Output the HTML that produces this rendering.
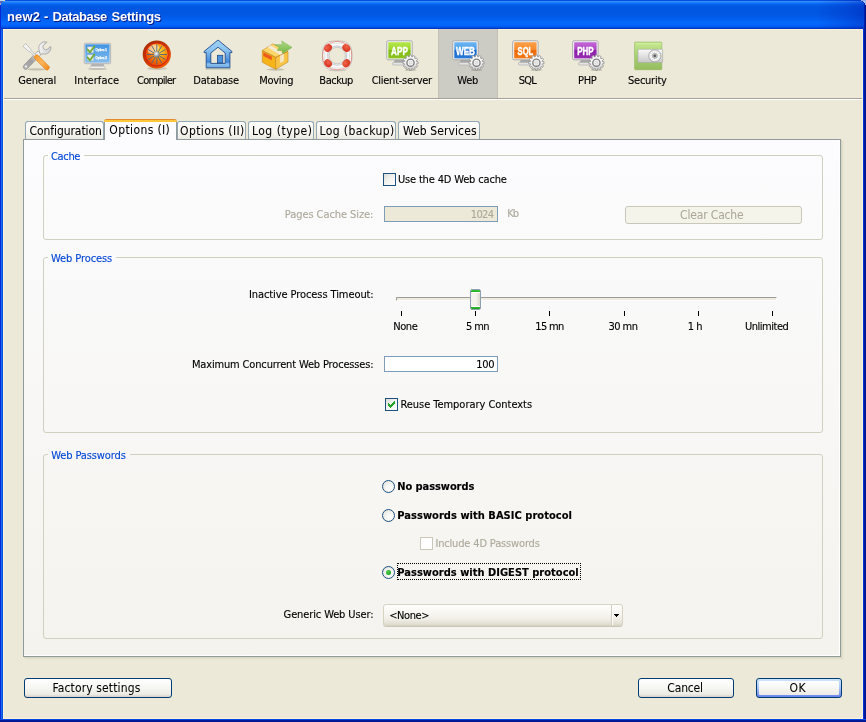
<!DOCTYPE html>
<html>
<head>
<meta charset="utf-8">
<title>new2 - Database Settings</title>
<style>
html,body{margin:0;padding:0;}
body{width:866px;height:722px;overflow:hidden;position:relative;background:#ece9d8;
 font-family:"DejaVu Sans Condensed","Liberation Sans",sans-serif;font-size:11px;color:#000;}
*{box-sizing:border-box;}
.abs{position:absolute;}
.tx{position:absolute;white-space:pre;margin:0;padding:0;}
#titlebar{left:0;top:0;width:866px;height:29px;
 background:linear-gradient(to bottom,#0150e0 0px,#0150e0 1px,#3a8cfb 1px,#3a8cfb 2px,#1c7cfa 2.5px,#0a70f8 3.5px,#0463ec 4.5px,#0359e4 6px,#0156e2 8px,#0156e2 14px,#025be9 17px,#0260f2 20px,#0468fc 22px,#0468fc 24px,#0260f8 26px,#0050e0 27.5px,#0035c5 28px,#0035c5 29px);}
#bl{left:0;top:29px;width:3px;height:693px;background:linear-gradient(to right,#0828d8 0,#0828d8 1px,#166aee 1px,#166aee 2px,#0452dd 2px,#0452dd 3px);}
#br{left:863px;top:29px;width:3px;height:693px;background:linear-gradient(to right,#0034d8 0,#0034d8 1px,#001da0 1px,#001da0 2px,#001589 2px,#001589 3px);}
#bb{left:0;top:719px;width:866px;height:3px;background:linear-gradient(to bottom,#0445ea 0,#0445ea 1px,#001da0 1px,#001da0 2px,#001589 2px,#001589 3px);}
.hl{background:#fdf3d8;}
.tab{position:absolute;top:121px;height:18px;border:1px solid #91a7b4;border-bottom:none;border-radius:3px 3px 0 0;
 background:linear-gradient(to bottom,#fdfdfb 0%,#f7f6f0 60%,#ecebe2 100%);}
#pane{left:23px;top:139px;width:818px;height:518px;border:1px solid #919b9c;
 background:linear-gradient(to bottom,#fcfcfe 0%,#f4f3ee 100%);box-shadow:inset -1px -1px 0 #ffffff,1px 1px 0 #d9d5c1,2px 2px 0 #e2dfcc,3px 3px 0 #e8e5d3;}
.grp{position:absolute;border:1px solid #d0d0bf;border-radius:3px;}
.gl{position:absolute;height:3px;}
.btn{position:absolute;height:20px;border:1px solid #003c74;border-radius:3px;background:linear-gradient(to bottom,#ffffff 0%,#f6f6f2 50%,#ecebe5 85%,#d6d0c5 100%);}
.inp{position:absolute;height:16px;border:1px solid #7f9db9;background:#fff;}
.cb{position:absolute;width:13px;height:13px;border:1px solid #1c5180;background:linear-gradient(135deg,#dcdcd7 0%,#f3f3f0 50%,#ffffff 100%);}
.rd{position:absolute;width:13px;height:13px;border:1px solid #1c5180;border-radius:50%;background:radial-gradient(circle at 65% 65%,#ffffff 0%,#f3f3f0 45%,#dcdcd7 100%);}
.tick{position:absolute;top:311px;width:1px;height:5px;background:#000;}
</style>
</head>
<body>
<!-- window chrome -->
<div class="abs" id="titlebar"></div>
<div class="abs" style="left:816px;top:0;width:50px;height:29px;background:linear-gradient(to right,rgba(0,24,170,0) 0%,rgba(0,24,170,0.22) 60%,rgba(0,24,170,0.42) 100%);"></div>
<div class="abs" style="left:0;top:5px;width:1px;height:24px;background:#0828d8;"></div>
<div class="abs" style="left:865px;top:5px;width:1px;height:24px;background:#00137f;"></div>
<div class="abs" style="left:864px;top:4px;width:1px;height:25px;background:#0020b0;"></div>
<svg class="abs" style="left:0;top:0" width="866" height="6" viewBox="0 0 866 6" shape-rendering="crispEdges">
<rect x="0" y="0" width="4" height="1" fill="#b4dcfa"/><rect x="4" y="0" width="1" height="1" fill="#e8dc98"/>
<rect x="0" y="1" width="3" height="1" fill="#6a68a8"/><rect x="0" y="2" width="2" height="1" fill="#5660b4"/>
<rect x="0" y="3" width="1" height="2" fill="#a0acd0"/>
<rect x="861" y="0" width="5" height="1" fill="#94aeea"/><rect x="863" y="1" width="3" height="1" fill="#b0c4f0"/>
<rect x="864" y="2" width="2" height="1" fill="#a8c0ec"/><rect x="865" y="3" width="1" height="2" fill="#a0b8e8"/>
<rect x="862" y="1" width="1" height="1" fill="#0a30c0"/><rect x="863" y="2" width="1" height="1" fill="#0a30c0"/><rect x="864" y="3" width="1" height="1" fill="#0a30c0"/>
</svg>
<div class="abs hl" style="left:3px;top:29px;width:860px;height:1px;"></div>
<div class="abs hl" style="left:3px;top:29px;width:1px;height:690px;"></div>
<div class="abs hl" style="left:862px;top:29px;width:1px;height:690px;"></div>
<div class="abs hl" style="left:3px;top:718px;width:860px;height:1px;"></div>
<div class="abs" id="bl"></div>
<div class="abs" id="br"></div>
<div class="abs" id="bb"></div>

<!-- toolbar -->
<div class="abs" style="left:438px;top:29px;width:60px;height:69px;background:#cdccc4;border-left:1px solid #c2c1b8;border-right:1px solid #c2c1b8;"></div>
<div class="abs" style="left:4px;top:98px;width:858px;height:1px;background:#a5a397;"></div>
<div class="abs" style="left:4px;top:99px;width:858px;height:1px;background:#ffffff;"></div>
<div id="icons" style="position:absolute;left:0;top:0;width:866px;height:100px;will-change:transform;">
<svg width="0" height="0" style="position:absolute"><defs>
<linearGradient id="gMetal" x1="0" y1="0" x2="1" y2="1"><stop offset="0" stop-color="#ffffff"/><stop offset="1" stop-color="#c8c8c8"/></linearGradient>
<linearGradient id="gOrange" x1="0" y1="0" x2="1" y2="0"><stop offset="0" stop-color="#f79a2a"/><stop offset="0.5" stop-color="#fdb55a"/><stop offset="1" stop-color="#f08a1c"/></linearGradient>
<linearGradient id="gGrayH" x1="0" y1="0" x2="1" y2="0"><stop offset="0" stop-color="#b4b4b4"/><stop offset="0.45" stop-color="#a0a0a0"/><stop offset="0.62" stop-color="#b8b8b8"/><stop offset="0.8" stop-color="#ececec"/><stop offset="1" stop-color="#f4f4f4"/></linearGradient>
<linearGradient id="gScreenB" x1="0" y1="0" x2="0" y2="1"><stop offset="0" stop-color="#3f93e2"/><stop offset="1" stop-color="#86bdec"/></linearGradient>
<linearGradient id="gStand" x1="0" y1="0" x2="0" y2="1"><stop offset="0" stop-color="#a8a8a8"/><stop offset="0.5" stop-color="#e8e8e8"/><stop offset="1" stop-color="#c4c4c4"/></linearGradient>
<radialGradient id="gComp" cx="0.62" cy="0.36" r="0.75"><stop offset="0" stop-color="#ffdc3c"/><stop offset="0.32" stop-color="#fca010"/><stop offset="0.68" stop-color="#f26000"/><stop offset="1" stop-color="#e43800"/></radialGradient>
<linearGradient id="gCompRing" x1="0.1" y1="0" x2="0.9" y2="1"><stop offset="0" stop-color="#9c2c04"/><stop offset="0.5" stop-color="#cc3c04"/><stop offset="1" stop-color="#f66408"/></linearGradient>
<radialGradient id="gBall" cx="0.4" cy="0.35" r="0.7"><stop offset="0" stop-color="#ffffff"/><stop offset="0.6" stop-color="#9aa4ae"/><stop offset="1" stop-color="#5a6672"/></radialGradient>
<linearGradient id="gHouse" x1="0" y1="0" x2="0" y2="1"><stop offset="0" stop-color="#9fd2f6"/><stop offset="0.35" stop-color="#8cc4f0"/><stop offset="0.8" stop-color="#3f86d8"/><stop offset="0.86" stop-color="#8ec2ee"/><stop offset="1" stop-color="#6aa8e4"/></linearGradient>
<linearGradient id="gArrow" x1="0" y1="0" x2="0" y2="1"><stop offset="0" stop-color="#b0dc84"/><stop offset="1" stop-color="#74b448"/></linearGradient>
<radialGradient id="gRed" cx="0.4" cy="0.35" r="0.7"><stop offset="0" stop-color="#f2644a"/><stop offset="1" stop-color="#d2301a"/></radialGradient>
<linearGradient id="gSafe" x1="0" y1="0" x2="0" y2="1"><stop offset="0" stop-color="#c6e890"/><stop offset="0.45" stop-color="#aad474"/><stop offset="1" stop-color="#96bc60"/></linearGradient>
<linearGradient id="gDoor" x1="0" y1="0" x2="0" y2="1"><stop offset="0" stop-color="#fafafa"/><stop offset="1" stop-color="#c8c8c8"/></linearGradient>
<linearGradient id="gGear" x1="0" y1="0" x2="0" y2="1"><stop offset="0" stop-color="#ffffff"/><stop offset="0.6" stop-color="#f0f0f0"/><stop offset="1" stop-color="#c4c4c4"/></linearGradient>
<linearGradient id="gAPP" x1="0" y1="0" x2="0" y2="1"><stop offset="0" stop-color="#b4e84a"/><stop offset="0.45" stop-color="#9cd42c"/><stop offset="0.5" stop-color="#84bc1a"/><stop offset="1" stop-color="#8cc41e"/></linearGradient>
<linearGradient id="gWEB" x1="0" y1="0" x2="0" y2="1"><stop offset="0" stop-color="#6cb8f4"/><stop offset="0.45" stop-color="#4a9ae8"/><stop offset="0.5" stop-color="#1a66c8"/><stop offset="1" stop-color="#2a7ad8"/></linearGradient>
<linearGradient id="gSQL" x1="0" y1="0" x2="0" y2="1"><stop offset="0" stop-color="#fca04a"/><stop offset="0.45" stop-color="#f88a2c"/><stop offset="0.5" stop-color="#ec6a0a"/><stop offset="1" stop-color="#f27a18"/></linearGradient>
<linearGradient id="gPHP" x1="0" y1="0" x2="0" y2="1"><stop offset="0" stop-color="#c46ad8"/><stop offset="0.45" stop-color="#aa44c4"/><stop offset="0.5" stop-color="#8a1ea6"/><stop offset="1" stop-color="#9a2cb4"/></linearGradient>
</defs></svg>
<svg class="abs" style="left:19px;top:38px" width="36" height="34" viewBox="19 38 36 34"><ellipse cx="36.5" cy="69.4" rx="9" ry="1.1" fill="#5a5846" opacity="0.28"/><g transform="translate(25.6,66.9) rotate(-46)"><rect x="-2.4" y="-2.4" width="23" height="4.8" rx="2.3" fill="url(#gGrayH)" stroke="#8a8a8a" stroke-width="0.6"/><circle cx="0.6" cy="0" r="1.1" fill="#f4f4f4"/></g><g transform="translate(44.6,47.9) rotate(-40)"><path d="M -7.5 2 L -5.5 -2.2 A 6.2 6.2 0 0 1 5.6 -2.8 L 1.5 -2.8 A 2.6 2.6 0 0 0 1.5 2.8 L 5.6 2.8 A 6.2 6.2 0 0 1 -5 3.6 L -7.5 2 Z" fill="url(#gMetal)" stroke="#9c9c9c" stroke-width="0.7"/></g><g transform="translate(24.3,44.9) rotate(45)"><path d="M0 -1.9 L7.5 -1.5 L9 -0.8 L16 -0.8 L16 0.8 L9 0.8 L7.5 1.5 L0 1.9 Z" fill="#f4f4f4" stroke="#a8a8a8" stroke-width="0.6"/><rect x="15.3" y="-2.3" width="19" height="4.6" rx="1.8" fill="url(#gOrange)" stroke="#d8801c" stroke-width="0.6" transform="rotate(0)"/></g></svg>
<svg class="abs" style="left:80px;top:38px" width="36" height="34" viewBox="80 38 36 34"><ellipse cx="97.5" cy="68.9" rx="9.5" ry="1.2" fill="#5a5846" opacity="0.28"/><path d="M91.6 63.6 H103.6 L104.4 66.4 H90.6 Z" fill="#b4b4b4"/><rect x="90.2" y="66.3" width="14.6" height="2.2" rx="0.6" fill="#eeeeee" stroke="#b0b0b0" stroke-width="0.5"/><rect x="84.3" y="43.3" width="26.3" height="20.4" rx="0.8" fill="#f4f4f4" stroke="#a6a6a6" stroke-width="0.8"/><rect x="85.3" y="44.3" width="24.3" height="18.4" fill="url(#gScreenB)"/><rect x="87.6" y="46.9" width="5.8" height="5.6" fill="#eeeeee" stroke="#c8c8c8" stroke-width="0.4"/><path d="M87.6 49.5 L90 52.3 L94.2 46.5" fill="none" stroke="#74ac34" stroke-width="1.9" stroke-linecap="round" stroke-linejoin="round"/><text x="95.6" y="51.4" font-family="Liberation Sans,sans-serif" font-weight="bold" font-size="3.6" fill="#ffffff" stroke="#ffffff" stroke-width="0.25" textLength="11.2" lengthAdjust="spacingAndGlyphs">Option 1</text><rect x="87.6" y="54.9" width="5.8" height="5.6" fill="#eeeeee" stroke="#c8c8c8" stroke-width="0.4"/><path d="M87.6 57.5 L90 60.3 L94.2 54.5" fill="none" stroke="#74ac34" stroke-width="1.9" stroke-linecap="round" stroke-linejoin="round"/><text x="95.6" y="59.4" font-family="Liberation Sans,sans-serif" font-weight="bold" font-size="3.6" fill="#ffffff" stroke="#ffffff" stroke-width="0.25" textLength="11.2" lengthAdjust="spacingAndGlyphs">Option 2</text></svg>
<svg class="abs" style="left:140px;top:38px" width="36" height="34" viewBox="140 38 36 34"><ellipse cx="157" cy="68.6" rx="10" ry="1.4" fill="#5a5846" opacity="0.25"/><circle cx="156.8" cy="54.5" r="14.1" fill="url(#gCompRing)"/><circle cx="156.8" cy="54.5" r="11.6" fill="url(#gComp)" stroke="#d41414" stroke-width="0.9"/><ellipse cx="153.3" cy="49.0" rx="6" ry="3.8" fill="#ffffff" opacity="0.55" transform="rotate(-30 153.3 49.0)"/><line x1="159.80" y1="54.50" x2="167.00" y2="54.50" stroke="#4c6680" stroke-width="0.9"/><line x1="159.40" y1="56.00" x2="165.63" y2="59.60" stroke="#4c6680" stroke-width="0.9"/><line x1="158.30" y1="57.10" x2="161.90" y2="63.33" stroke="#4c6680" stroke-width="0.9"/><line x1="156.80" y1="57.50" x2="156.80" y2="64.70" stroke="#4c6680" stroke-width="0.9"/><line x1="155.30" y1="57.10" x2="151.70" y2="63.33" stroke="#4c6680" stroke-width="0.9"/><line x1="154.20" y1="56.00" x2="147.97" y2="59.60" stroke="#4c6680" stroke-width="0.9"/><line x1="153.80" y1="54.50" x2="146.60" y2="54.50" stroke="#4c6680" stroke-width="0.9"/><line x1="154.20" y1="53.00" x2="147.97" y2="49.40" stroke="#4c6680" stroke-width="0.9"/><line x1="155.30" y1="51.90" x2="151.70" y2="45.67" stroke="#4c6680" stroke-width="0.9"/><line x1="156.80" y1="51.50" x2="156.80" y2="44.30" stroke="#4c6680" stroke-width="0.9"/><line x1="158.30" y1="51.90" x2="161.90" y2="45.67" stroke="#4c6680" stroke-width="0.9"/><line x1="159.40" y1="53.00" x2="165.63" y2="49.40" stroke="#4c6680" stroke-width="0.9"/><circle cx="156.8" cy="54.5" r="2.9" fill="url(#gBall)"/></svg>
<svg class="abs" style="left:200px;top:38px" width="36" height="34" viewBox="200 38 36 34"><path d="M205.4 69 H231 " stroke="#5a5846" stroke-width="1.4" opacity="0.25"/><path d="M218 40 L231.9 51.4 L231.9 52.6 L229.9 52.6 L229.9 67.8 L206.2 67.8 L206.2 52.6 L204.1 52.6 L204.1 51.4 Z M218 47.2 L225.2 53 L225.2 63.4 L210.8 63.4 L210.8 53 Z" fill="url(#gHouse)" fill-rule="evenodd" stroke="#204c8c" stroke-width="0.9" stroke-linejoin="round"/><rect x="217.4" y="55.3" width="5.4" height="7.6" fill="#4a92dc" stroke="#204c8c" stroke-width="0.8"/></svg>
<svg class="abs" style="left:259px;top:38px" width="36" height="34" viewBox="259 38 36 34"><ellipse cx="275.5" cy="69.5" rx="9" ry="1.2" fill="#5a5846" opacity="0.28"/><path d="M262.3 50.5 L275.7 57.3 L275.7 69.3 L262.3 62.3 Z" fill="#f6b419" stroke="#c88818" stroke-width="0.6"/><path d="M263.3 52.3 L271.8 56.4 L271.8 60.2 L263.3 56 Z" fill="#ee5a1e"/><path d="M275.7 57.3 L288 51.3 L288 62 L275.7 69.3 Z" fill="#f9c548" stroke="#c88818" stroke-width="0.6"/><path d="M280.2 55.1 L283.8 53.3 L283.8 61 L280.2 63 Z" fill="#f4e8cc"/><path d="M262.3 50.5 L272.8 43.9 L288 51.3 L275.7 57.3 Z" fill="#fbd66a" stroke="#c88818" stroke-width="0.6"/><path d="M267.6 47.2 L270.6 45.3 L283.8 53.3 L280.2 55.1 Z" fill="#f6ead2"/><path d="M262.3 50.5 L275.7 57.3 L288 51.3" fill="none" stroke="#c88a30" stroke-width="0.5"/><path d="M274.9 44.7 L282.3 44.7 L281.7 40.9 L292 47.4 L282.4 53.5 L282.4 50.4 L277.2 50.4 L279.4 47.4 Z" fill="url(#gArrow)" stroke="#6eae48" stroke-width="0.5" stroke-linejoin="round"/></svg>
<svg class="abs" style="left:319px;top:38px" width="36" height="34" viewBox="319 38 36 34"><ellipse cx="337.3" cy="70.3" rx="8.5" ry="1.0" fill="#5a5846" opacity="0.22"/><path d="M332.9 41.0 H341.5 A10.3 10.3 0 0 1 351.8 51.3 V59.900000000000006 A10.3 10.3 0 0 1 341.5 70.2 H332.9 A10.3 10.3 0 0 1 322.59999999999997 59.900000000000006 V51.3 A10.3 10.3 0 0 1 332.9 41.0 Z M328.9 55.6 A8.3 8.3 0 1 0 345.5 55.6 A8.3 8.3 0 1 0 328.9 55.6 Z" fill="#fcfcfc" fill-rule="evenodd" stroke="#b4b4b4" stroke-width="0.7"/><circle cx="337.2" cy="55.6" r="9.600000000000001" fill="none" stroke="#d2d5d8" stroke-width="1.4"/><rect x="324.79999999999995" y="43.2" width="24.799999999999997" height="24.799999999999997" rx="8.3" fill="none" stroke="#dcdee0" stroke-width="0.9"/><ellipse cx="328.10" cy="48.00" rx="4.2" ry="3.5" transform="rotate(-45 328.10 48.00)" fill="url(#gRed)"/><ellipse cx="346.30" cy="48.00" rx="4.2" ry="3.5" transform="rotate(45 346.30 48.00)" fill="url(#gRed)"/><ellipse cx="328.10" cy="63.20" rx="4.2" ry="3.5" transform="rotate(45 328.10 63.20)" fill="url(#gRed)"/><ellipse cx="346.30" cy="63.20" rx="4.2" ry="3.5" transform="rotate(-45 346.30 63.20)" fill="url(#gRed)"/><path d="M325.59999999999997 45.0 Q337.2 37.8 348.8 45.0 Q355.0 55.6 348.8 66.2 Q337.2 73.4 325.59999999999997 66.2 Q319.4 55.6 325.59999999999997 45.0 Z" fill="none" stroke="#dc5038" stroke-width="0.55" opacity="0.9"/></svg>
<svg class="abs" style="left:384px;top:38px" width="36" height="34" viewBox="384 38 36 34"><ellipse cx="410.5" cy="70.2" rx="6" ry="0.9" fill="#5a5846" opacity="0.25"/><path d="M394.9 59.8 H404.1 L404.9 62.8 H393.7 Z" fill="#a8a8a8"/><rect x="392.7" y="62.4" width="14" height="2.6" rx="0.6" fill="#e4e4e4" stroke="#a8a8a8" stroke-width="0.6"/><rect x="386.8" y="40.8" width="25.4" height="19" rx="1.4" fill="#f8f8f8" stroke="#a0a0a0" stroke-width="0.9"/><rect x="388.3" y="42.2" width="22.4" height="16.2" fill="url(#gAPP)"/><text x="399.5" y="54.5" text-anchor="middle" font-family="Liberation Sans,sans-serif" font-weight="bold" font-size="11.6" fill="#ffffff" stroke="#ffffff" stroke-width="0.45" textLength="16.8" lengthAdjust="spacingAndGlyphs">APP</text><path d="M416.39 61.58 L418.14 61.73 L418.14 63.67 L416.39 63.82 L416.17 64.67 L417.60 65.68 L416.63 67.36 L415.04 66.62 L414.42 67.24 L415.16 68.83 L413.48 69.80 L412.47 68.37 L411.62 68.59 L411.47 70.34 L409.53 70.34 L409.38 68.59 L408.53 68.37 L407.52 69.80 L405.84 68.83 L406.58 67.24 L405.96 66.62 L404.37 67.36 L403.40 65.68 L404.83 64.67 L404.61 63.82 L402.86 63.67 L402.86 61.73 L404.61 61.58 L404.83 60.73 L403.40 59.72 L404.37 58.04 L405.96 58.78 L406.58 58.16 L405.84 56.57 L407.52 55.60 L408.53 57.03 L409.38 56.81 L409.53 55.06 L411.47 55.06 L411.62 56.81 L412.47 57.03 L413.48 55.60 L415.16 56.57 L414.42 58.16 L415.04 58.78 L416.63 58.04 L417.60 59.72 L416.17 60.73 Z" fill="url(#gGear)" stroke="#909090" stroke-width="0.8" stroke-linejoin="round"/><circle cx="410.5" cy="62.7" r="3.6" fill="#f6f6f6" stroke="#808080" stroke-width="1.4"/><circle cx="410.5" cy="62.7" r="1.5" fill="#ececec" stroke="#bcbcbc" stroke-width="0.5"/></svg>
<svg class="abs" style="left:450px;top:38px" width="36" height="34" viewBox="450 38 36 34"><ellipse cx="476.5" cy="70.2" rx="6" ry="0.9" fill="#5a5846" opacity="0.25"/><path d="M460.9 59.8 H470.1 L470.9 62.8 H459.7 Z" fill="#a8a8a8"/><rect x="458.7" y="62.4" width="14" height="2.6" rx="0.6" fill="#e4e4e4" stroke="#a8a8a8" stroke-width="0.6"/><rect x="452.8" y="40.8" width="25.4" height="19" rx="1.4" fill="#f8f8f8" stroke="#a0a0a0" stroke-width="0.9"/><rect x="454.3" y="42.2" width="22.4" height="16.2" fill="url(#gWEB)"/><text x="465.5" y="54.5" text-anchor="middle" font-family="Liberation Sans,sans-serif" font-weight="bold" font-size="11.6" fill="#ffffff" stroke="#ffffff" stroke-width="0.45" textLength="19" lengthAdjust="spacingAndGlyphs">WEB</text><path d="M482.39 61.58 L484.14 61.73 L484.14 63.67 L482.39 63.82 L482.17 64.67 L483.60 65.68 L482.63 67.36 L481.04 66.62 L480.42 67.24 L481.16 68.83 L479.48 69.80 L478.47 68.37 L477.62 68.59 L477.47 70.34 L475.53 70.34 L475.38 68.59 L474.53 68.37 L473.52 69.80 L471.84 68.83 L472.58 67.24 L471.96 66.62 L470.37 67.36 L469.40 65.68 L470.83 64.67 L470.61 63.82 L468.86 63.67 L468.86 61.73 L470.61 61.58 L470.83 60.73 L469.40 59.72 L470.37 58.04 L471.96 58.78 L472.58 58.16 L471.84 56.57 L473.52 55.60 L474.53 57.03 L475.38 56.81 L475.53 55.06 L477.47 55.06 L477.62 56.81 L478.47 57.03 L479.48 55.60 L481.16 56.57 L480.42 58.16 L481.04 58.78 L482.63 58.04 L483.60 59.72 L482.17 60.73 Z" fill="url(#gGear)" stroke="#909090" stroke-width="0.8" stroke-linejoin="round"/><circle cx="476.5" cy="62.7" r="3.6" fill="#f6f6f6" stroke="#808080" stroke-width="1.4"/><circle cx="476.5" cy="62.7" r="1.5" fill="#ececec" stroke="#bcbcbc" stroke-width="0.5"/></svg>
<svg class="abs" style="left:510px;top:38px" width="36" height="34" viewBox="510 38 36 34"><ellipse cx="536.4" cy="70.2" rx="6" ry="0.9" fill="#5a5846" opacity="0.25"/><path d="M520.8 59.8 H530.0 L530.8 62.8 H519.6 Z" fill="#a8a8a8"/><rect x="518.6" y="62.4" width="14" height="2.6" rx="0.6" fill="#e4e4e4" stroke="#a8a8a8" stroke-width="0.6"/><rect x="512.6999999999999" y="40.8" width="25.4" height="19" rx="1.4" fill="#f8f8f8" stroke="#a0a0a0" stroke-width="0.9"/><rect x="514.1999999999999" y="42.2" width="22.4" height="16.2" fill="url(#gSQL)"/><text x="525.4" y="54.5" text-anchor="middle" font-family="Liberation Sans,sans-serif" font-weight="bold" font-size="11.6" fill="#ffffff" stroke="#ffffff" stroke-width="0.45" textLength="15.7" lengthAdjust="spacingAndGlyphs">SQL</text><path d="M542.29 61.58 L544.04 61.73 L544.04 63.67 L542.29 63.82 L542.07 64.67 L543.50 65.68 L542.53 67.36 L540.94 66.62 L540.32 67.24 L541.06 68.83 L539.38 69.80 L538.37 68.37 L537.52 68.59 L537.37 70.34 L535.43 70.34 L535.28 68.59 L534.43 68.37 L533.42 69.80 L531.74 68.83 L532.48 67.24 L531.86 66.62 L530.27 67.36 L529.30 65.68 L530.73 64.67 L530.51 63.82 L528.76 63.67 L528.76 61.73 L530.51 61.58 L530.73 60.73 L529.30 59.72 L530.27 58.04 L531.86 58.78 L532.48 58.16 L531.74 56.57 L533.42 55.60 L534.43 57.03 L535.28 56.81 L535.43 55.06 L537.37 55.06 L537.52 56.81 L538.37 57.03 L539.38 55.60 L541.06 56.57 L540.32 58.16 L540.94 58.78 L542.53 58.04 L543.50 59.72 L542.07 60.73 Z" fill="url(#gGear)" stroke="#909090" stroke-width="0.8" stroke-linejoin="round"/><circle cx="536.4" cy="62.7" r="3.6" fill="#f6f6f6" stroke="#808080" stroke-width="1.4"/><circle cx="536.4" cy="62.7" r="1.5" fill="#ececec" stroke="#bcbcbc" stroke-width="0.5"/></svg>
<svg class="abs" style="left:570px;top:38px" width="36" height="34" viewBox="570 38 36 34"><ellipse cx="596.4" cy="70.2" rx="6" ry="0.9" fill="#5a5846" opacity="0.25"/><path d="M580.8 59.8 H590.0 L590.8 62.8 H579.6 Z" fill="#a8a8a8"/><rect x="578.6" y="62.4" width="14" height="2.6" rx="0.6" fill="#e4e4e4" stroke="#a8a8a8" stroke-width="0.6"/><rect x="572.6999999999999" y="40.8" width="25.4" height="19" rx="1.4" fill="#f8f8f8" stroke="#a0a0a0" stroke-width="0.9"/><rect x="574.1999999999999" y="42.2" width="22.4" height="16.2" fill="url(#gPHP)"/><text x="585.4" y="54.5" text-anchor="middle" font-family="Liberation Sans,sans-serif" font-weight="bold" font-size="11.6" fill="#ffffff" stroke="#ffffff" stroke-width="0.45" textLength="16.4" lengthAdjust="spacingAndGlyphs">PHP</text><path d="M602.29 61.58 L604.04 61.73 L604.04 63.67 L602.29 63.82 L602.07 64.67 L603.50 65.68 L602.53 67.36 L600.94 66.62 L600.32 67.24 L601.06 68.83 L599.38 69.80 L598.37 68.37 L597.52 68.59 L597.37 70.34 L595.43 70.34 L595.28 68.59 L594.43 68.37 L593.42 69.80 L591.74 68.83 L592.48 67.24 L591.86 66.62 L590.27 67.36 L589.30 65.68 L590.73 64.67 L590.51 63.82 L588.76 63.67 L588.76 61.73 L590.51 61.58 L590.73 60.73 L589.30 59.72 L590.27 58.04 L591.86 58.78 L592.48 58.16 L591.74 56.57 L593.42 55.60 L594.43 57.03 L595.28 56.81 L595.43 55.06 L597.37 55.06 L597.52 56.81 L598.37 57.03 L599.38 55.60 L601.06 56.57 L600.32 58.16 L600.94 58.78 L602.53 58.04 L603.50 59.72 L602.07 60.73 Z" fill="url(#gGear)" stroke="#909090" stroke-width="0.8" stroke-linejoin="round"/><circle cx="596.4" cy="62.7" r="3.6" fill="#f6f6f6" stroke="#808080" stroke-width="1.4"/><circle cx="596.4" cy="62.7" r="1.5" fill="#ececec" stroke="#bcbcbc" stroke-width="0.5"/></svg>
<svg class="abs" style="left:630px;top:38px" width="36" height="34" viewBox="630 38 36 34"><rect x="634.6" y="42.1" width="27.2" height="27.6" rx="0.8" fill="url(#gSafe)" stroke="#8eb458" stroke-width="0.6"/><rect x="635.6" y="43" width="25.2" height="1.4" fill="#d4f0a4" opacity="0.8"/><rect x="638" y="49.3" width="24.6" height="13.2" rx="0.6" fill="url(#gDoor)" stroke="#a8a8a8" stroke-width="0.6"/><circle cx="654.8" cy="55.8" r="6.1" fill="#e2e2e2" stroke="#a2a2a2" stroke-width="0.8"/><line x1="657.70" y1="56.58" x2="659.82" y2="57.15" stroke="#ffffff" stroke-width="1.1"/><line x1="656.92" y1="57.92" x2="658.48" y2="59.48" stroke="#ffffff" stroke-width="1.1"/><line x1="655.58" y1="58.70" x2="656.15" y2="60.82" stroke="#ffffff" stroke-width="1.1"/><line x1="654.02" y1="58.70" x2="653.45" y2="60.82" stroke="#ffffff" stroke-width="1.1"/><line x1="652.68" y1="57.92" x2="651.12" y2="59.48" stroke="#ffffff" stroke-width="1.1"/><line x1="651.90" y1="56.58" x2="649.78" y2="57.15" stroke="#ffffff" stroke-width="1.1"/><line x1="651.90" y1="55.02" x2="649.78" y2="54.45" stroke="#ffffff" stroke-width="1.1"/><line x1="652.68" y1="53.68" x2="651.12" y2="52.12" stroke="#ffffff" stroke-width="1.1"/><line x1="654.02" y1="52.90" x2="653.45" y2="50.78" stroke="#ffffff" stroke-width="1.1"/><line x1="655.58" y1="52.90" x2="656.15" y2="50.78" stroke="#ffffff" stroke-width="1.1"/><line x1="656.92" y1="53.68" x2="658.48" y2="52.12" stroke="#ffffff" stroke-width="1.1"/><line x1="657.70" y1="55.02" x2="659.82" y2="54.45" stroke="#ffffff" stroke-width="1.1"/><circle cx="654.8" cy="55.8" r="2.6" fill="#c4c4c4" stroke="#9a9a9a" stroke-width="0.5"/><circle cx="654.8" cy="55.8" r="1.4" fill="#5a5a5a"/></svg>

</div>

<!-- tab pane -->
<div class="abs" id="pane"></div>
<div class="tab" style="left:25px;width:79px;"></div>
<div class="tab" style="left:177px;width:69px;"></div>
<div class="tab" style="left:248px;width:66px;"></div>
<div class="tab" style="left:316px;width:80px;"></div>
<div class="tab" style="left:398px;width:82px;"></div>
<div class="tab" id="seltab" style="left:104px;top:119px;width:73px;height:21px;background:#fcfcfe;border-top:none;border-color:#919b9c;">
<div class="abs" style="left:-1px;top:0;width:73px;height:3px;border-radius:3px 3px 0 0;background:linear-gradient(to bottom,#e68b2c 0,#e68b2c 1px,#ffc73c 1px,#ffc73c 3px);"></div></div>

<!-- Cache group -->
<div class="grp" style="left:43px;top:155px;width:780px;height:85px;"></div>
<div class="gl" style="left:48px;top:154px;width:36px;background:#fcfcfd;"></div>
<div class="cb" style="left:383px;top:173px;"></div>
<div class="inp" style="left:384px;top:206px;width:114px;background:#ece9d8;"></div>
<div class="btn" style="left:625px;top:206px;width:177px;height:18px;border-color:#c9c7ba;background:#f5f4ea;"></div>

<!-- Web Process group -->
<div class="grp" style="left:43px;top:257px;width:780px;height:176px;"></div>
<div class="gl" style="left:48px;top:256px;width:68px;background:#fafafa;"></div>
<div class="abs" style="left:396px;top:297px;width:381px;height:4px;border:1px solid;border-color:#9d9c99 #fff #fff #9d9c99;border-radius:1px;background:#f0ede0;"></div>
<div class="abs" id="thumb" style="left:470px;top:289px;width:11px;height:21px;border:1px solid #8e9fb4;border-radius:2px;background:linear-gradient(to right,#f4f3ee 0%,#f4f3ee 55%,#e6e4dc 80%,#d9d7ce 100%);overflow:hidden;">
 <div class="abs" style="left:0;top:0;width:9px;height:3px;background:linear-gradient(to bottom,#3cc43c 0,#1fae1f 2px,#ffffff 2px,#ffffff 3px);"></div>
 <div class="abs" style="left:0;bottom:0;width:9px;height:3px;background:linear-gradient(to bottom,#ffffff 0,#ffffff 1px,#2fc02f 1px,#1aa01a 3px);"></div>
</div>
<div class="tick" style="left:401px;"></div>
<div class="tick" style="left:475px;"></div>
<div class="tick" style="left:549px;"></div>
<div class="tick" style="left:624px;"></div>
<div class="tick" style="left:698px;"></div>
<div class="tick" style="left:772px;"></div>
<div class="inp" style="left:384px;top:356px;width:114px;"></div>
<div class="cb" style="left:385px;top:398px;"><svg class="abs" style="left:0;top:0" width="11" height="11" viewBox="0 0 11 11" shape-rendering="crispEdges"><g fill="#21a121"><rect x="2" y="4" width="1" height="3"/><rect x="3" y="5" width="1" height="3"/><rect x="4" y="6" width="1" height="3"/><rect x="5" y="5" width="1" height="3"/><rect x="6" y="4" width="1" height="3"/><rect x="7" y="3" width="1" height="3"/><rect x="8" y="2" width="1" height="3"/></g></svg></div>

<!-- Web Passwords group -->
<div class="grp" style="left:43px;top:454px;width:780px;height:185px;"></div>
<div class="gl" style="left:48px;top:453px;width:82px;background:#f8f8f6;"></div>
<div class="rd" style="left:382px;top:480px;"></div>
<div class="rd" style="left:382px;top:509px;"></div>
<div class="cb" style="left:420px;top:537px;border-color:#cac8bb;background:#fff;"></div>
<div class="rd" style="left:382px;top:566px;"><div class="abs" style="left:3px;top:3px;width:5px;height:5px;border-radius:50%;background:radial-gradient(circle at 40% 40%,#55d551 0%,#21a121 70%,#1a7e1a 100%);"></div></div>
<div class="abs" style="left:397px;top:563px;width:184px;height:17px;border:1px dotted #000;"></div>
<div class="abs" id="dd" style="left:383px;top:604px;width:240px;height:22px;border:1px solid #d6d3c3;border-radius:3px;background:linear-gradient(to bottom,#fefefd 0%,#f6f5f0 45%,#eeece4 75%,#dedbcd 100%);box-shadow:0 1px 0 #cbc8b8;">
 <div class="abs" style="left:227px;top:0;width:1px;height:20px;background:#d3d0c1;"></div>
 <div class="abs" style="left:228px;top:0;width:1px;height:20px;background:#ffffff;"></div>
 <svg class="abs" style="left:230px;top:9px" width="5" height="3" viewBox="0 0 5 3" shape-rendering="crispEdges"><rect x="0" y="0" width="5" height="1"/><rect x="1" y="1" width="3" height="1"/><rect x="2" y="2" width="1" height="1"/></svg>
</div>

<!-- bottom buttons -->
<div class="btn" style="left:24px;top:678px;width:148px;"></div>
<div class="btn" style="left:638px;top:678px;width:96px;"></div>
<div class="btn" style="left:756px;top:678px;width:86px;background:linear-gradient(to bottom,#cee7ff 0%,#a9c5f8 50%,#6982ee 100%);"><div class="abs" style="left:2px;top:2px;width:80px;height:14px;border-radius:1px;background:linear-gradient(to bottom,#ffffff 0%,#f6f6f2 50%,#ecebe5 100%);"></div></div>

<!-- text -->
<div id="txt" style="position:absolute;left:0;top:0;width:866px;height:722px;will-change:transform;">
<div id="title" class="tx" style="left:7.00px;top:9.31px;font:bold 13px/16px 'Liberation Sans',sans-serif;letter-spacing:0.000px;color:#fff;text-shadow:1px 1px 0 #0a1883;"><span style="letter-spacing:0.15px">new2</span><span style="letter-spacing:0.3px"> - </span><span style="letter-spacing:-0.45px">Database</span><span style="letter-spacing:1.1px"> </span><span style="letter-spacing:-0.25px">Settings</span></div>
<div id="l1" class="tx" style="-webkit-text-stroke-width:0.12px;left:18.28px;top:74.00px;font:normal 11px/14px 'DejaVu Sans Condensed','Liberation Sans',sans-serif;letter-spacing:-0.184px;color:#000;">General</div>
<div id="l2" class="tx" style="-webkit-text-stroke-width:0.12px;left:74.33px;top:74.00px;font:normal 11px/14px 'DejaVu Sans Condensed','Liberation Sans',sans-serif;letter-spacing:0.061px;color:#000;">Interface</div>
<div id="l3" class="tx" style="-webkit-text-stroke-width:0.12px;left:137.00px;top:74.00px;font:normal 11px/14px 'DejaVu Sans Condensed','Liberation Sans',sans-serif;letter-spacing:-0.768px;color:#000;">Compiler</div>
<div id="l4" class="tx" style="-webkit-text-stroke-width:0.12px;left:193.22px;top:74.00px;font:normal 11px/14px 'DejaVu Sans Condensed','Liberation Sans',sans-serif;letter-spacing:-0.179px;color:#000;">Database</div>
<div id="l5" class="tx" style="-webkit-text-stroke-width:0.12px;left:259.24px;top:74.00px;font:normal 11px/14px 'DejaVu Sans Condensed','Liberation Sans',sans-serif;letter-spacing:-0.291px;color:#000;">Moving</div>
<div id="l6" class="tx" style="-webkit-text-stroke-width:0.12px;left:319.35px;top:74.00px;font:normal 11px/14px 'DejaVu Sans Condensed','Liberation Sans',sans-serif;letter-spacing:-0.450px;color:#000;">Backup</div>
<div id="l7" class="tx" style="-webkit-text-stroke-width:0.12px;left:371.63px;top:74.00px;font:normal 11px/14px 'DejaVu Sans Condensed','Liberation Sans',sans-serif;letter-spacing:-0.252px;color:#000;">Client-server</div>
<div id="l8" class="tx" style="-webkit-text-stroke-width:0.12px;left:457.29px;top:74.00px;font:normal 11px/14px 'DejaVu Sans Condensed','Liberation Sans',sans-serif;letter-spacing:-0.215px;color:#000;">Web</div>
<div id="l9" class="tx" style="-webkit-text-stroke-width:0.12px;left:518.72px;top:74.00px;font:normal 11px/14px 'DejaVu Sans Condensed','Liberation Sans',sans-serif;letter-spacing:-0.743px;color:#000;">SQL</div>
<div id="l10" class="tx" style="-webkit-text-stroke-width:0.12px;left:578.12px;top:74.00px;font:normal 11px/14px 'DejaVu Sans Condensed','Liberation Sans',sans-serif;letter-spacing:-0.324px;color:#000;">PHP</div>
<div id="l11" class="tx" style="-webkit-text-stroke-width:0.12px;left:628.08px;top:74.00px;font:normal 11px/14px 'DejaVu Sans Condensed','Liberation Sans',sans-serif;letter-spacing:-0.267px;color:#000;">Security</div>
<div id="tb1" class="tx" style="-webkit-text-stroke-width:0.05px;left:29.53px;top:124.00px;font:normal 12px/15px 'DejaVu Sans Condensed','Liberation Sans',sans-serif;letter-spacing:-0.073px;color:#000;">Configuration</div>
<div id="tb2" class="tx" style="-webkit-text-stroke-width:0.05px;left:109.34px;top:123.00px;font:normal 12px/15px 'DejaVu Sans Condensed','Liberation Sans',sans-serif;letter-spacing:0.380px;color:#000;">Options (I)</div>
<div id="tb3" class="tx" style="-webkit-text-stroke-width:0.05px;left:180.02px;top:124.00px;font:normal 12px/15px 'DejaVu Sans Condensed','Liberation Sans',sans-serif;letter-spacing:0.400px;color:#000;">Options (II)</div>
<div id="tb4" class="tx" style="-webkit-text-stroke-width:0.05px;left:251.89px;top:124.00px;font:normal 12px/15px 'DejaVu Sans Condensed','Liberation Sans',sans-serif;letter-spacing:0.542px;color:#000;">Log (type)</div>
<div id="tb5" class="tx" style="-webkit-text-stroke-width:0.05px;left:319.47px;top:124.00px;font:normal 12px/15px 'DejaVu Sans Condensed','Liberation Sans',sans-serif;letter-spacing:0.423px;color:#000;">Log (backup)</div>
<div id="tb6" class="tx" style="-webkit-text-stroke-width:0.05px;left:403.02px;top:124.00px;font:normal 12px/15px 'DejaVu Sans Condensed','Liberation Sans',sans-serif;letter-spacing:0.098px;color:#000;">Web Services</div>
<div id="g1" class="tx" style="-webkit-text-stroke-width:0.12px;left:51.01px;top:150.00px;font:normal 11px/14px 'DejaVu Sans Condensed','Liberation Sans',sans-serif;letter-spacing:-0.334px;color:#0046d5;">Cache</div>
<div id="g2" class="tx" style="-webkit-text-stroke-width:0.12px;left:51.06px;top:252.00px;font:normal 11px/14px 'DejaVu Sans Condensed','Liberation Sans',sans-serif;letter-spacing:-0.101px;color:#0046d5;">Web Process</div>
<div id="g3" class="tx" style="-webkit-text-stroke-width:0.12px;left:51.23px;top:449.00px;font:normal 11px/14px 'DejaVu Sans Condensed','Liberation Sans',sans-serif;letter-spacing:-0.112px;color:#0046d5;">Web Passwords</div>
<div id="c1" class="tx" style="-webkit-text-stroke-width:0.12px;left:397.91px;top:173.00px;font:normal 11px/14px 'DejaVu Sans Condensed','Liberation Sans',sans-serif;letter-spacing:-0.161px;color:#000;">Use the 4D Web cache</div>
<div id="c2" class="tx" style="-webkit-text-stroke-width:0.12px;left:284.80px;top:208.00px;font:normal 11px/14px 'DejaVu Sans Condensed','Liberation Sans',sans-serif;letter-spacing:-0.073px;color:#aca899;">Pages Cache Size:</div>
<div id="c3" class="tx" style="-webkit-text-stroke-width:0.12px;left:470.67px;top:208.00px;font:normal 11px/14px 'DejaVu Sans Condensed','Liberation Sans',sans-serif;letter-spacing:-0.567px;color:#aca899;">1024</div>
<div id="c4" class="tx" style="-webkit-text-stroke-width:0.12px;left:507.33px;top:207.00px;font:normal 11px/14px 'DejaVu Sans Condensed','Liberation Sans',sans-serif;letter-spacing:-1.099px;color:#aca899;">Kb</div>
<div id="c5" class="tx" style="-webkit-text-stroke-width:0.05px;left:680.06px;top:208.00px;font:normal 12px/15px 'DejaVu Sans Condensed','Liberation Sans',sans-serif;letter-spacing:-0.160px;color:#aca899;">Clear Cache</div>
<div id="p1" class="tx" style="-webkit-text-stroke-width:0.12px;left:248.97px;top:288.00px;font:normal 11px/14px 'DejaVu Sans Condensed','Liberation Sans',sans-serif;letter-spacing:-0.085px;color:#000;">Inactive Process Timeout:</div>
<div id="s1" class="tx" style="-webkit-text-stroke-width:0.12px;left:393.13px;top:320.00px;font:normal 11px/14px 'DejaVu Sans Condensed','Liberation Sans',sans-serif;letter-spacing:-0.362px;color:#000;">None</div>
<div id="s2" class="tx" style="-webkit-text-stroke-width:0.12px;left:465.94px;top:320.00px;font:normal 11px/14px 'DejaVu Sans Condensed','Liberation Sans',sans-serif;letter-spacing:-0.623px;color:#000;">5 mn</div>
<div id="s3" class="tx" style="-webkit-text-stroke-width:0.12px;left:535.34px;top:320.00px;font:normal 11px/14px 'DejaVu Sans Condensed','Liberation Sans',sans-serif;letter-spacing:-0.675px;color:#000;">15 mn</div>
<div id="s4" class="tx" style="-webkit-text-stroke-width:0.12px;left:608.42px;top:320.00px;font:normal 11px/14px 'DejaVu Sans Condensed','Liberation Sans',sans-serif;letter-spacing:-0.532px;color:#000;">30 mn</div>
<div id="s5" class="tx" style="-webkit-text-stroke-width:0.12px;left:687.76px;top:320.00px;font:normal 11px/14px 'DejaVu Sans Condensed','Liberation Sans',sans-serif;letter-spacing:-0.437px;color:#000;">1 h</div>
<div id="s6" class="tx" style="-webkit-text-stroke-width:0.12px;left:744.88px;top:320.00px;font:normal 11px/14px 'DejaVu Sans Condensed','Liberation Sans',sans-serif;letter-spacing:-0.468px;color:#000;">Unlimited</div>
<div id="p2" class="tx" style="-webkit-text-stroke-width:0.12px;left:191.95px;top:358.00px;font:normal 11px/14px 'DejaVu Sans Condensed','Liberation Sans',sans-serif;letter-spacing:-0.156px;color:#000;">Maximum Concurrent Web Processes:</div>
<div id="p3" class="tx" style="-webkit-text-stroke-width:0.12px;left:476.35px;top:358.00px;font:normal 11px/14px 'DejaVu Sans Condensed','Liberation Sans',sans-serif;letter-spacing:-0.335px;color:#000;">100</div>
<div id="p4" class="tx" style="-webkit-text-stroke-width:0.12px;left:400.38px;top:398.00px;font:normal 11px/14px 'DejaVu Sans Condensed','Liberation Sans',sans-serif;letter-spacing:-0.033px;color:#000;">Reuse Temporary Contexts</div>
<div id="w1" class="tx" style="-webkit-text-stroke-width:0.15px;left:397.35px;top:480.00px;font:bold 11px/14px 'DejaVu Sans Condensed','Liberation Sans',sans-serif;letter-spacing:-0.083px;color:#000;">No passwords</div>
<div id="w2" class="tx" style="-webkit-text-stroke-width:0.15px;left:397.35px;top:509.00px;font:bold 11px/14px 'DejaVu Sans Condensed','Liberation Sans',sans-serif;letter-spacing:0.039px;color:#000;">Passwords with BASIC protocol</div>
<div id="w3" class="tx" style="-webkit-text-stroke-width:0.12px;left:435.38px;top:537.00px;font:normal 11px/14px 'DejaVu Sans Condensed','Liberation Sans',sans-serif;letter-spacing:-0.160px;color:#aca899;">Include 4D Passwords</div>
<div id="w4" class="tx" style="-webkit-text-stroke-width:0.15px;left:397.35px;top:566.00px;font:bold 11px/14px 'DejaVu Sans Condensed','Liberation Sans',sans-serif;letter-spacing:0.018px;color:#000;">Passwords with DIGEST protocol</div>
<div id="w5" class="tx" style="-webkit-text-stroke-width:0.12px;left:283.62px;top:608.00px;font:normal 11px/14px 'DejaVu Sans Condensed','Liberation Sans',sans-serif;letter-spacing:-0.126px;color:#000;">Generic Web User:</div>
<div id="w6" class="tx" style="-webkit-text-stroke-width:0.12px;left:389.13px;top:609.00px;font:normal 11px/14px 'DejaVu Sans Condensed','Liberation Sans',sans-serif;letter-spacing:-0.409px;color:#000;">&lt;None&gt;</div>
<div id="b1" class="tx" style="-webkit-text-stroke-width:0.05px;left:52.58px;top:681.00px;font:normal 12px/15px 'DejaVu Sans Condensed','Liberation Sans',sans-serif;letter-spacing:0.128px;color:#000;">Factory settings</div>
<div id="b2" class="tx" style="-webkit-text-stroke-width:0.05px;left:667.30px;top:681.00px;font:normal 12px/15px 'DejaVu Sans Condensed','Liberation Sans',sans-serif;letter-spacing:-0.161px;color:#000;">Cancel</div>
<div id="b3" class="tx" style="-webkit-text-stroke-width:0.05px;left:789.49px;top:681.00px;font:normal 12px/15px 'DejaVu Sans Condensed','Liberation Sans',sans-serif;letter-spacing:0.397px;color:#000;">OK</div>
</div>
</body>
</html>
